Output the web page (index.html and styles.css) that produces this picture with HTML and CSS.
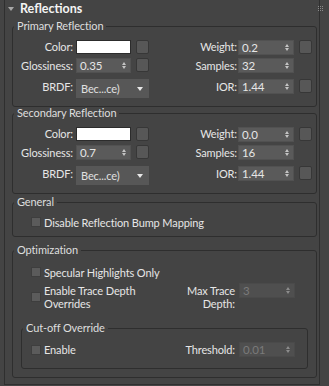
FILE: index.html
```html
<!DOCTYPE html>
<html lang="en">

<head>
    <meta charset="UTF-8">
    <meta name="viewport" content="width=device-width, initial-scale=1.0">
    <title>Reflections</title>
    <link rel="stylesheet" href="styles.css">
</head>

<body>
    <div class="rollout">
        <div class="rollout-header">
            <span class="caret"></span>
            <span class="rollout-title">Reflections</span>
            <span class="grip">
                <svg width="5" height="5" viewBox="0 0 5 5">
                    <rect x="0" y="0" width="1" height="1" /><rect x="2" y="0" width="1" height="1" /><rect x="4" y="0" width="1" height="1" />
                    <rect x="0" y="2" width="1" height="1" /><rect x="2" y="2" width="1" height="1" /><rect x="4" y="2" width="1" height="1" />
                    <rect x="0" y="4" width="1" height="1" /><rect x="2" y="4" width="1" height="1" /><rect x="4" y="4" width="1" height="1" />
                </svg>
            </span>
        </div>
        <div class="rollout-body">
            <fieldset class="group group-first">
                <legend>Primary Reflection</legend>
                <div class="params">
                    <label class="lbl row1">Color:</label>
                    <div class="ctl">
                        <span class="swatch"></span>
                        <span class="map-btn"></span>
                    </div>
                    <label class="lbl lbl-right row1">Weight:</label>
                    <div class="ctl">
                        <span class="spinner"><span class="value">0.2</span><span class="arrows"></span></span>
                        <span class="map-btn"></span>
                    </div>

                    <label class="lbl">Glossiness:</label>
                    <div class="ctl">
                        <span class="spinner"><span class="value">0.35</span><span class="arrows"></span></span>
                        <span class="map-btn"></span>
                    </div>
                    <label class="lbl lbl-right">Samples:</label>
                    <div class="ctl">
                        <span class="spinner"><span class="value">32</span><span class="arrows"></span></span>
                    </div>

                    <label class="lbl">BRDF:</label>
                    <div class="ctl">
                        <span class="dropdown"><span class="value">Bec...ce)</span><span class="drop-arrow"></span></span>
                    </div>
                    <label class="lbl lbl-right">IOR:</label>
                    <div class="ctl">
                        <span class="spinner"><span class="value">1.44</span><span class="arrows"></span></span>
                        <span class="map-btn"></span>
                    </div>
                </div>
            </fieldset>

            <fieldset class="group group-second">
                <legend>Secondary Reflection</legend>
                <div class="params">
                    <label class="lbl row1">Color:</label>
                    <div class="ctl">
                        <span class="swatch"></span>
                        <span class="map-btn"></span>
                    </div>
                    <label class="lbl lbl-right row1">Weight:</label>
                    <div class="ctl">
                        <span class="spinner"><span class="value">0.0</span><span class="arrows"></span></span>
                        <span class="map-btn"></span>
                    </div>

                    <label class="lbl">Glossiness:</label>
                    <div class="ctl">
                        <span class="spinner"><span class="value">0.7</span><span class="arrows"></span></span>
                        <span class="map-btn"></span>
                    </div>
                    <label class="lbl lbl-right">Samples:</label>
                    <div class="ctl">
                        <span class="spinner"><span class="value">16</span><span class="arrows"></span></span>
                    </div>

                    <label class="lbl">BRDF:</label>
                    <div class="ctl">
                        <span class="dropdown"><span class="value">Bec...ce)</span><span class="drop-arrow"></span></span>
                    </div>
                    <label class="lbl lbl-right">IOR:</label>
                    <div class="ctl">
                        <span class="spinner"><span class="value">1.44</span><span class="arrows"></span></span>
                        <span class="map-btn"></span>
                    </div>
                </div>
            </fieldset>

            <fieldset class="group group-general">
                <legend>General</legend>
                <div class="check-row general-row">
                    <span class="checkbox"></span>
                    <span>Disable Reflection Bump Mapping</span>
                </div>
            </fieldset>

            <fieldset class="group group-opt">
                <legend>Optimization</legend>
                <div class="check-row opt-row">
                    <span class="checkbox"></span>
                    <span>Specular Highlights Only</span>
                </div>
                <div class="trace-row">
                    <div class="check-row trace-check">
                        <span class="checkbox"></span>
                        <span>Enable Trace Depth<br>Overrides</span>
                    </div>
                    <label class="lbl-multi">Max Trace<br>Depth:</label>
                    <span class="spinner disabled"><span class="value">3</span><span class="arrows"></span></span>
                </div>

                <fieldset class="group group-cutoff">
                    <legend>Cut-off Override</legend>
                    <div class="cutoff-row">
                        <div class="check-row">
                            <span class="checkbox"></span>
                            <span>Enable</span>
                        </div>
                        <label class="lbl-threshold">Threshold:</label>
                        <span class="spinner disabled"><span class="value">0.01</span><span class="arrows"></span></span>
                    </div>
                </fieldset>
            </fieldset>
        </div>
    </div>
</body>

</html>
```

FILE: styles.css
```css
body {
    margin: 0;
    background-color: #444444;
    color: #e6e6e6;
    font-family: Lato, "Noto Sans", sans-serif;
    font-size: 11px;
    letter-spacing: -0.12px;
}

.rollout {
    margin-left: 4px;
    width: 314px;
    border: 1px solid #2f2f2f;
    border-top: none;
    padding-bottom: 6px;
}

.rollout-header {
    display: flex;
    align-items: center;
    height: 17px;
    padding: 0 0 2px 3px;
}

.caret {
    width: 0;
    height: 0;
    border-left: 3px solid transparent;
    border-right: 3px solid transparent;
    border-top: 4px solid #a8a8a8;
    margin-right: 6px;
}

.rollout-title {
    font-weight: bold;
    font-size: 12.5px;
    letter-spacing: 0;
    color: #f4f4f4;
}

.grip {
    margin-left: auto;
    margin-right: -4px;
    display: flex;
    fill: #8a8a8a;
}

.rollout-body {
    padding: 0 2px 0 7px;
}

/* group boxes */
.group {
    margin: 0;
    padding: 0;
    min-width: 0;
    border: 1px solid #2e2e2e;
    border-radius: 3px;
}

.group legend {
    padding: 0 3px;
    margin-left: 1px;
    line-height: 14px;
    color: #dedede;
}

.group-second {
    margin-top: -1px;
}

.group-general {
    margin-top: 1px;
}

.group-opt {
    margin-top: 6px;
    padding-bottom: 8px;
}

.group-cutoff {
    margin: 11px 8px 0 8px;
}

/* parameter grids */
.params {
    display: grid;
    grid-template-columns: 63px 73px 89px auto;
    grid-template-rows: 18px 21px 19px;
    align-items: start;
    padding: 7px 0 8px 0;
}

.lbl {
    text-align: right;
    padding-right: 3px;
    line-height: 15px;
    white-space: nowrap;
}

.lbl.row1 {
    line-height: 14px;
}

.lbl-right {
    padding-right: 1px;
}

.ctl {
    display: flex;
    align-items: flex-start;
}

.swatch {
    width: 53px;
    height: 12px;
    background-color: #ffffff;
    border: 1px solid #2c2c2c;
}

.map-btn {
    width: 11px;
    height: 12px;
    margin-left: 5px;
    background-color: #575757;
    border: 1px solid #373737;
    border-radius: 2px;
}

.spinner {
    position: relative;
    display: flex;
    align-items: center;
    width: 54px;
    height: 13px;
    background-color: #5a5a5a;
    border: 1px solid #515151;
}

.spinner .value {
    padding-left: 3px;
    color: #e6e6e6;
    font-size: 11.5px;
}

.spinner .arrows {
    position: absolute;
    right: 4px;
    top: 3px;
    width: 0;
    height: 0;
    border-left: 2.5px solid transparent;
    border-right: 2.5px solid transparent;
    border-bottom: 3px solid #c4c4c4;
}

.spinner .arrows::after {
    content: "";
    position: absolute;
    left: -2.5px;
    top: 4px;
    width: 0;
    height: 0;
    border-left: 2.5px solid transparent;
    border-right: 2.5px solid transparent;
    border-top: 3px solid #c4c4c4;
}

.spinner.disabled {
    background-color: #4f4f4f;
    border-color: #4a4a4a;
}

.spinner.disabled .value {
    color: #7a7a7a;
}

.spinner.disabled .arrows {
    border-bottom-color: #8c8c8c;
}

.spinner.disabled .arrows::after {
    border-top-color: #8c8c8c;
}

.dropdown {
    display: flex;
    align-items: center;
    width: 73px;
    height: 19px;
    background-color: #575757;
}

.dropdown .value {
    padding-left: 5px;
    flex: 1;
    color: #e0e0e0;
}

.drop-arrow {
    width: 0;
    height: 0;
    margin-right: 6px;
    border-left: 3px solid transparent;
    border-right: 3px solid transparent;
    border-top: 4px solid #e8e8e8;
}

/* checkbox rows */
.check-row {
    display: flex;
    align-items: center;
    line-height: 13px;
}

.checkbox {
    width: 8px;
    height: 8px;
    margin-right: 3px;
    background-color: #5b5b5b;
    border: 1px solid #3e3e3e;
    flex-shrink: 0;
}

.general-row {
    height: 14px;
    padding: 6px 0 7px 18px;
}

.opt-row {
    height: 14px;
    padding: 8px 0 0 18px;
}

.trace-row {
    display: flex;
    align-items: flex-start;
    margin-top: 5px;
    padding-left: 18px;
}

.trace-check {
    flex: 1;
}

.lbl-multi {
    text-align: right;
    line-height: 13px;
    margin-right: 4px;
}

.trace-row .spinner {
    margin-right: 21px;
    margin-top: -1px;
}

.cutoff-row {
    display: flex;
    align-items: center;
    height: 15px;
    padding: 7px 0 11px 9px;
}

.cutoff-row .check-row {
    flex: 1;
}

.lbl-threshold {
    margin-right: 4px;
}

.cutoff-row .spinner {
    margin-right: 12px;
}
```
